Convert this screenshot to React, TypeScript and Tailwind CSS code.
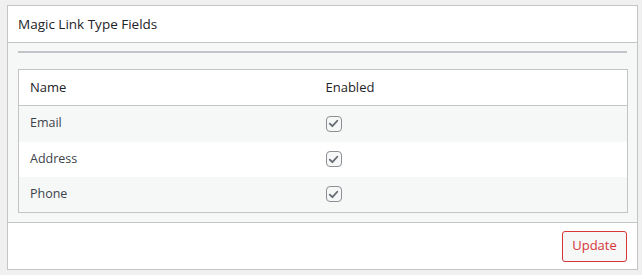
const FIELDS = ['Email', 'Address', 'Phone'];

function CheckBox() {
  return (
    <span className="flex h-4 w-4 items-center justify-center rounded-[4px] border border-[#8c8f94] bg-[#f6f7f7]">
      <svg viewBox="0 0 16 16" className="h-[13px] w-[13px]" fill="none">
        <path d="M3.4 8.2 L6.6 11.3 L12.7 4.6" stroke="#646970" strokeWidth="2.2" strokeLinecap="round" strokeLinejoin="round" />
      </svg>
    </span>
  );
}

export default function App() {
  return (
    <div className="min-h-[275px] bg-[#f0f0f1] pt-[5px] pl-[7px] pr-[4px] font-['Open_Sans',sans-serif] text-[#1d2327]">
      <div className="w-[631px] border border-[#c3c4c7] bg-white">
        <div className="flex h-[36px] items-center px-[10px] text-[13.5px] text-[#1d2327]">
          Magic Link Type Fields
        </div>
        <div className="border-t border-[#c3c4c7] bg-[#f6f7f7] px-[10px] pt-[8px] pb-[9px]">
          <div className="h-[2px] bg-[#c3c4c7]" />
          <table className="mt-[16px] w-[610px] border-collapse border border-[#c3c4c7] text-[13px]">
            <thead>
              <tr className="border-b border-[#c3c4c7] bg-white">
                <th className="h-[36px] w-[307px] pl-[11px] text-left font-normal text-[#1d2327]">Name</th>
                <th className="h-[36px] text-left font-normal text-[#1d2327]">Enabled</th>
              </tr>
            </thead>
            <tbody>
              {FIELDS.map((f, i) => (
                <tr key={f} className={i % 2 === 0 ? 'bg-[#f6f7f7]' : 'bg-white'}>
                  <td className={`${i === 1 ? 'h-[35px]' : 'h-[36px]'} pl-[11px] text-[12.5px] text-[#3c434a]`}>{f}</td>
                  <td className={i === 1 ? 'h-[35px]' : 'h-[36px]'}>
                    <CheckBox />
                  </td>
                </tr>
              ))}
            </tbody>
          </table>
        </div>
        <div className="flex h-[47px] items-center justify-end border-t border-[#c3c4c7] px-[10px]">
          <button
            type="button"
            className="h-[31px] w-[65px] rounded-[3px] border border-[#d63638] bg-[#f6f7f7] text-[13px] text-[#d63638]"
          >
            Update
          </button>
        </div>
      </div>
    </div>
  );
}
